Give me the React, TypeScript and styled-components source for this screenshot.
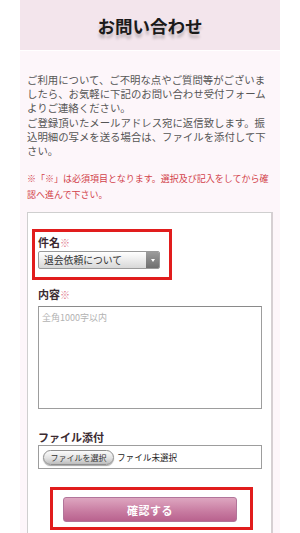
import React from "react";
import styled, { createGlobalStyle } from "styled-components";

const Global = createGlobalStyle`
  html, body { margin: 0; padding: 0; background: #ffffff; }
  body { font-family: "Noto Sans CJK JP", "Noto Sans", sans-serif; }
  * { box-sizing: border-box; }
`;

const Page = styled.div`
  width: 260px;
  margin: 0 auto;
`;

const Header = styled.header`
  height: 50px;
  margin-bottom: 1px;
  background: #f3e5ec;
  display: flex;
  align-items: center;
  justify-content: center;
`;

const Title = styled.h1`
  margin: 0;
  font-size: 17.5px;
  font-weight: 700;
  color: #1a1a1a;
  text-shadow: 0 4px 3px rgba(0, 0, 0, 0.22);
`;

const Content = styled.main`
  background: #fdf6fa;
  padding: 22px 7px 0;
`;

const Intro = styled.p`
  margin: 0;
  font-size: 10.4px;
  line-height: 14.2px;
  color: #555555;
`;

const Notice = styled.p`
  margin: 13px 0 0;
  font-size: 9px;
  line-height: 15.5px;
  color: #d2424a;
`;

const FormBox = styled.form`
  margin-top: 10px;
  background: #ffffff;
  border: 1px solid #cfcfcf;
  border-right: 2px solid #d6d0d3;
  border-bottom: none;
  padding: 16px 9px 4px 10px;
  display: flex;
  flex-direction: column;
  align-items: flex-start;
`;

const Highlight = styled.div<{ $pad: string; $offset: string }>`
  border: 3px solid #e11d1d;
  padding: ${(p) => p.$pad};
  margin: ${(p) => p.$offset};
  display: flex;
  flex-direction: column;
  align-items: flex-start;
`;

const Label = styled.label<{ $gap: number; $top?: number }>`
  display: block;
  font-size: 11px;
  line-height: 14px;
  font-weight: 700;
  color: #3b2a31;
  margin: ${(p) => p.$top ?? 0}px 0 ${(p) => p.$gap}px;
`;

const Req = styled.span`
  color: #e0788c;
  font-weight: 400;
  font-size: 10px;
`;

const SelectBox = styled.div`
  width: 122px;
  height: 18px;
  display: flex;
  border: 1px solid #9a9a9a;
  border-radius: 2px;
  overflow: hidden;
  background: linear-gradient(#ffffff, #e4e4e4 70%, #d8d8d8);
`;

const SelectField = styled.select`
  appearance: none;
  -webkit-appearance: none;
  flex: 1;
  min-width: 0;
  border: none;
  background: transparent;
  font-family: inherit;
  font-size: 9.8px;
  color: #333333;
  padding: 0 0 0 5px;
  height: 16px;
  line-height: 16px;
  outline: none;
`;

const Arrow = styled.span`
  width: 13px;
  height: 16px;
  background: linear-gradient(#9c9c9c, #6f6f6f);
  display: flex;
  align-items: center;
  justify-content: center;
  &::after {
    content: "";
    width: 0;
    height: 0;
    border-left: 2.5px solid transparent;
    border-right: 2.5px solid transparent;
    border-top: 3.5px solid #ffffff;
  }
`;

const TextArea = styled.textarea`
  width: 224px;
  height: 103px;
  border: 1px solid #9d9d9d;
  border-top-color: #8a8a8a;
  resize: none;
  padding: 4px 3px;
  font-family: inherit;
  font-size: 9px;
  line-height: 13px;
  color: #333333;
  background: #ffffff;
  outline: none;
  &::placeholder {
    color: #b2b2b2;
  }
`;

const FileBox = styled.div`
  width: 224px;
  height: 24px;
  border: 1px solid #9d9d9d;
  background: #ffffff;
  display: flex;
  align-items: center;
  padding-left: 4px;
  gap: 3px;
`;

const FileButton = styled.button`
  width: 71px;
  height: 15px;
  padding: 0;
  border: 1px solid #8f8f8f;
  border-radius: 8px;
  background: linear-gradient(#fbfbfb, #e2e2e2 55%, #bdbdbd);
  box-shadow: 0 1px 1px rgba(0, 0, 0, 0.35);
  font-family: inherit;
  font-size: 8px;
  line-height: 13px;
  color: #333333;
`;

const FileName = styled.span`
  font-size: 8.6px;
  color: #222222;
`;

const Submit = styled.button`
  width: 174px;
  height: 25px;
  border: 1px solid #b2759a;
  border-radius: 3px;
  background: linear-gradient(#dea6c0, #c77aa0 60%, #b9628e);
  color: #ffffff;
  font-family: inherit;
  font-size: 11px;
  font-weight: 700;
  letter-spacing: 0.5px;
  padding: 0;
`;

export default function App() {
  return (
    <>
      <Global />
      <Page>
        <Header>
          <Title>お問い合わせ</Title>
        </Header>
        <Content>
          <Intro>
            ご利用について、ご不明な点やご質問等がございましたら、お気軽に下記のお問い合わせ受付フォームよりご連絡ください。
            <br />
            ご登録頂いたメールアドレス宛に返信致します。振込明細の写メを送る場合は、ファイルを添付して下さい。
          </Intro>
          <Notice>
            ※「※」は必須項目となります。選択及び記入をしてから確認へ進んで下さい。
          </Notice>
          <FormBox onSubmit={(e) => e.preventDefault()}>
            <Highlight $pad="3px 9px 8px 3px" $offset="0 0 0 -6px">
              <Label $gap={1}>
                件名<Req>※</Req>
              </Label>
              <SelectBox>
                <SelectField defaultValue="withdraw">
                  <option value="withdraw">退会依頼について</option>
                </SelectField>
                <Arrow />
              </SelectBox>
            </Highlight>
            <Label $top={7} $gap={4}>
              内容<Req>※</Req>
            </Label>
            <TextArea placeholder="全角1000字以内" />
            <Label $top={21} $gap={1}>
              ファイル添付
            </Label>
            <FileBox>
              <FileButton type="button">ファイルを選択</FileButton>
              <FileName>ファイル未選択</FileName>
            </FileBox>
            <Highlight $pad="7px 13px 5px 10px" $offset="18px 0 0 12px">
              <Submit type="submit">確認する</Submit>
            </Highlight>
          </FormBox>
        </Content>
      </Page>
    </>
  );
}
